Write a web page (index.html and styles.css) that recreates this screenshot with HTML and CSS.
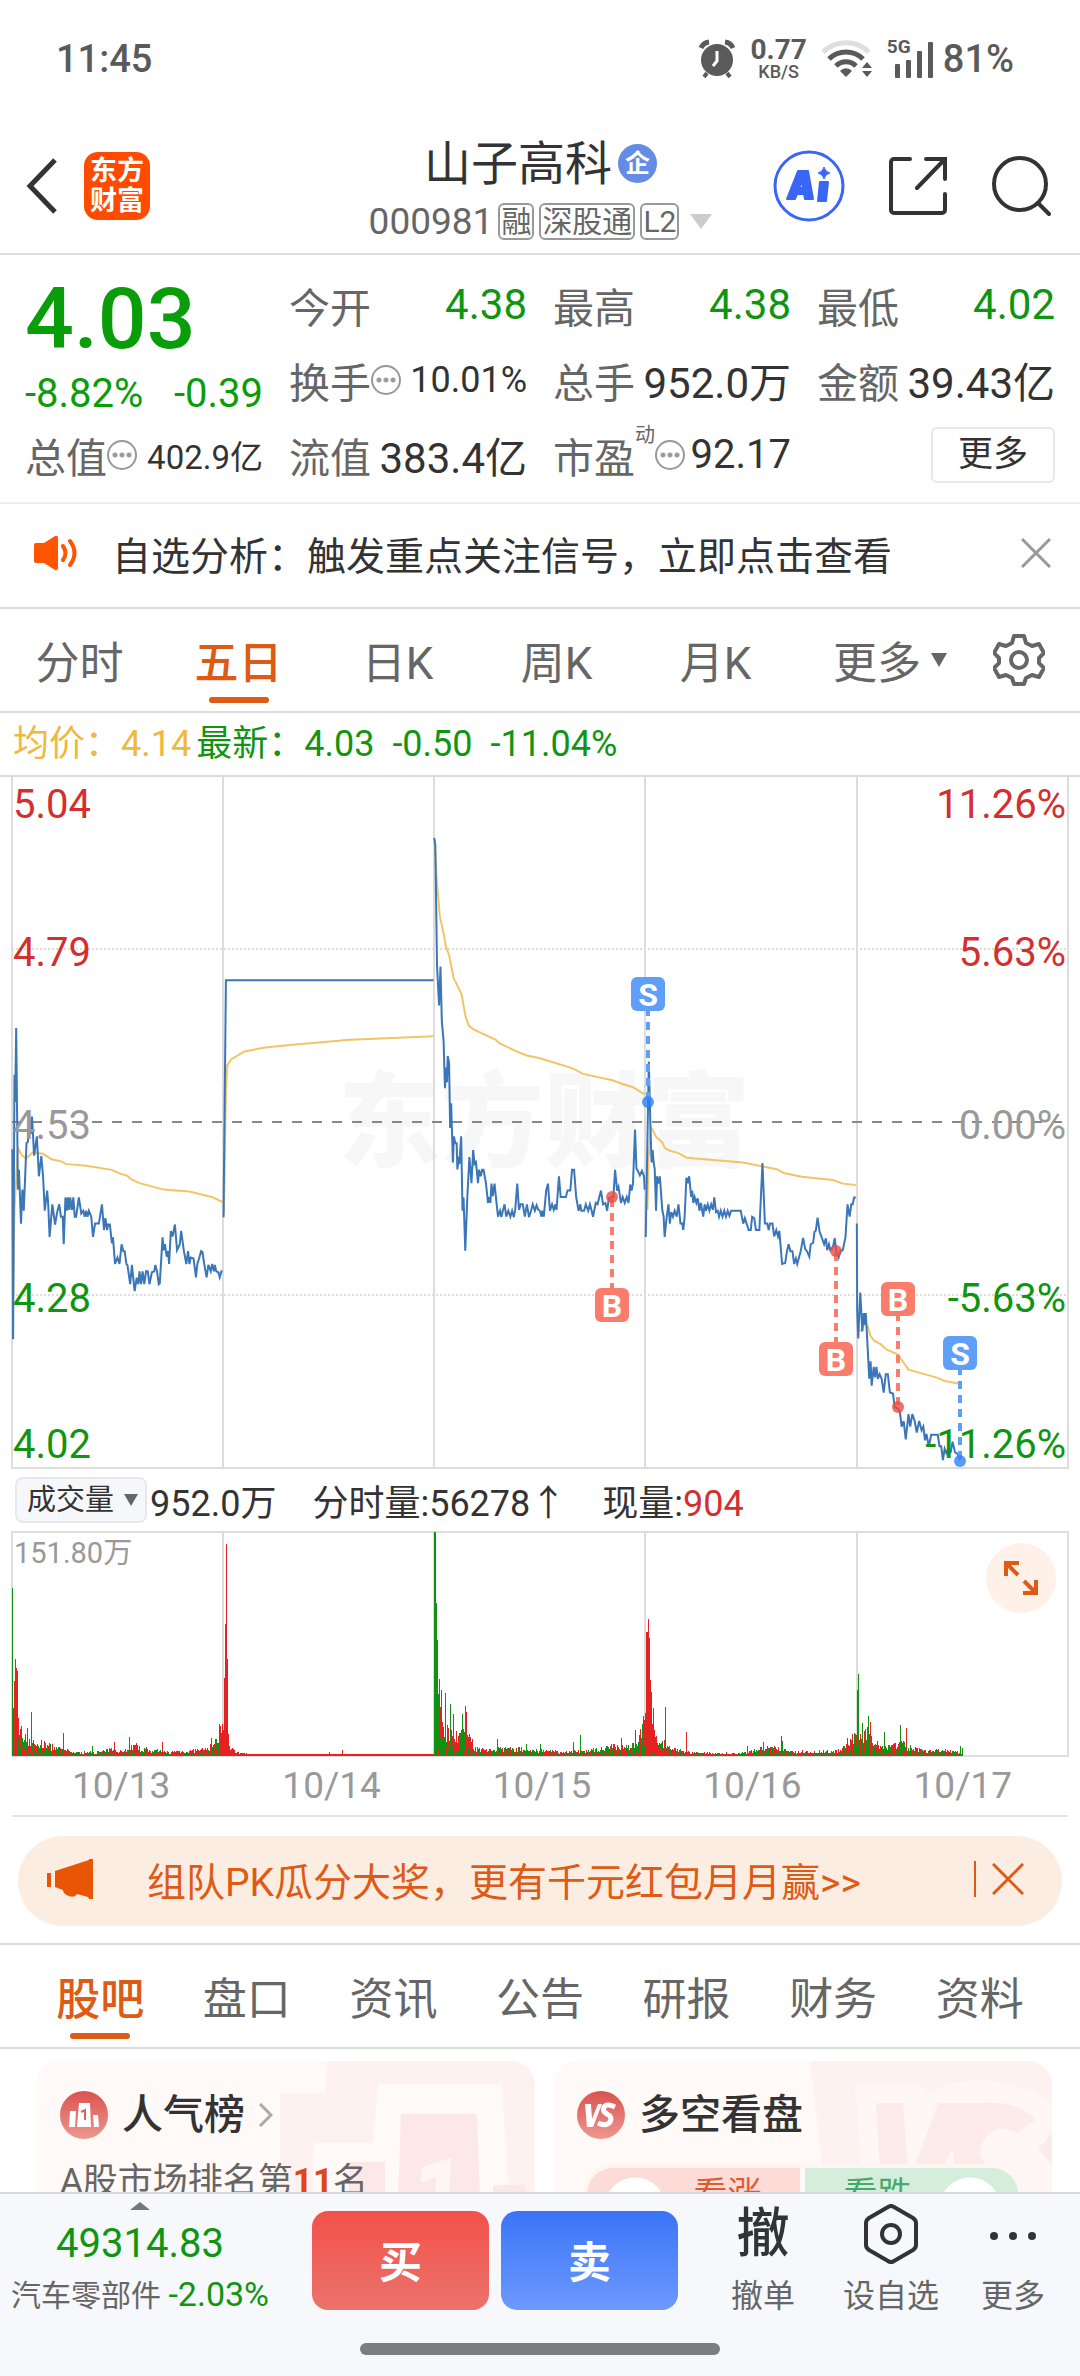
FILE: index.html
```html
<!DOCTYPE html>
<html lang="zh-CN">
<head>
  <meta charset="UTF-8">
  <meta name="viewport" content="width=device-width, initial-scale=1">
  <title>山子高科 000981</title>
  <link rel="stylesheet" href="styles.css">
</head>
<body>
  <div class="status-bar">
    <span class="clock">11:45</span>
    <div class="status-icons">
      <svg width="38" height="40" viewBox="0 0 38 40" fill="none" stroke="#5a5a5a">
        <circle cx="19" cy="21" r="16" fill="#5a5a5a" stroke="none"/>
        <path d="M3 9a10 10 0 0 1 8-6M35 9a10 10 0 0 0-8-6" stroke-width="5"/>
        <path d="M9 34l-3 4M29 34l3 4" stroke-width="4"/>
        <path d="M19 12v10l-4 5" stroke="#fff" stroke-width="3"/>
      </svg>
      <div class="net-speed"><b>0.77</b><span>KB/S</span></div>
      <svg width="52" height="40" viewBox="0 0 52 40" fill="none" stroke="#5a5a5a" stroke-width="5">
        <path d="M2 13a33 33 0 0 1 46 0" stroke="#dedede"/>
        <path d="M8 20a24 24 0 0 1 34 0M15 27a14 14 0 0 1 20 0"/>
        <path d="M25 38l-6-6a8 8 0 0 1 12 0z" fill="#5a5a5a" stroke="none"/>
        <path d="M41 29l5-6 5 6zM41 32l5 6 5-6z" fill="#5a5a5a" stroke="none"/>
      </svg>
      <div class="signal">
        <b>5G</b>
        <svg width="38" height="38" viewBox="0 0 38 38" fill="#5a5a5a">
          <rect x="0" y="24" width="5" height="14" rx="1"/><rect x="11" y="20" width="5" height="18" rx="1"/>
          <rect x="22" y="11" width="5" height="27" rx="1"/><rect x="33" y="2" width="5" height="36" rx="1"/>
        </svg>
      </div>
      <span class="battery">81%</span>
    </div>
  </div>

  <header class="header">
    <div class="header-left">
      <button class="icon-btn" aria-label="返回">
        <svg width="32" height="56" viewBox="0 0 32 56" fill="none" stroke="#333" stroke-width="5"><path d="M29 2L4 28l25 26"/></svg>
      </button>
      <a class="brand" href="#">东方<br>财富</a>
    </div>
    <div class="header-title">
      <h1>山子高科<span class="corp">企</span></h1>
      <div class="code-row">
        <span>000981</span><i>融</i><i>深股通</i><i>L2</i>
        <svg width="22" height="16" viewBox="0 0 22 16"><path d="M0 0h22L11 15z" fill="#ccc"/></svg>
      </div>
    </div>
    <div class="header-right">
      <button class="icon-btn" aria-label="Ai">
        <svg width="72" height="72" viewBox="0 0 72 72" fill="#3a66f5" stroke="#3a66f5" stroke-linejoin="round">
          <circle cx="36" cy="36" r="34" fill="none" stroke-width="3"/>
          <path d="M14 49l11-28h10l5 28h-8l-1-5h-7l-2 5zM26 38h4l-1-7z" fill-rule="evenodd" stroke-width="2"/>
          <path d="M47 32h8l-2 19h-8z" stroke-width="2"/>
          <path d="M51 17q1 5 6 6q-5 1-6 6q-1-5-6-6q5-1 6-6z" stroke-width="1"/>
        </svg>
      </button>
      <button class="icon-btn" aria-label="分享">
        <svg width="58" height="58" viewBox="0 0 58 58" fill="none" stroke="#333" stroke-width="4" stroke-linecap="round">
          <path d="M21 2H5a3 3 0 0 0-3 3v48a3 3 0 0 0 3 3h48a3 3 0 0 0 3-3V37"/>
          <path d="M37 2h19v20M56 2L28 31"/>
        </svg>
      </button>
      <button class="icon-btn" aria-label="搜索">
        <svg width="60" height="60" viewBox="0 0 60 60" fill="none" stroke="#333" stroke-width="4" stroke-linecap="round">
          <circle cx="29" cy="28" r="26"/><path d="M47 47l11 11"/>
        </svg>
      </button>
    </div>
  </header>

  <main>
    <section class="quote">
      <div class="price"><strong>4.03</strong><p><span>-8.82%</span><span>-0.39</span></p></div>
      <dl><dt>今开</dt><dd class="down">4.38</dd></dl>
      <dl><dt>最高</dt><dd class="down">4.38</dd></dl>
      <dl><dt>最低</dt><dd class="down">4.02</dd></dl>
      <dl><dt>换手<em class="dots"></em></dt><dd class="mid">10.01%</dd></dl>
      <dl><dt>总手</dt><dd>952.0万</dd></dl>
      <dl><dt>金额</dt><dd>39.43亿</dd></dl>
      <dl><dt>总值<em class="dots"></em></dt><dd class="small">402.9亿</dd></dl>
      <dl><dt>流值</dt><dd>383.4亿</dd></dl>
      <dl><dt>市盈<sup>动</sup><em class="dots"></em></dt><dd class="pe">92.17</dd></dl>
      <button class="more-btn">更多</button>
    </section>

    <section class="notice">
      <svg width="44" height="36" viewBox="0 0 44 36" fill="#ff5500">
        <path d="M2 8h8L21 1q3-1 3 2v30q0 3-3 2l-11-7H2q-2 0-2-2V10q0-2 2-2z"/>
        <path d="M29 11q5 7 0 14M36 6q9 12 0 24" fill="none" stroke="#ff5500" stroke-width="4" stroke-linecap="round"/>
      </svg>
      <p>自选分析：触发重点关注信号，立即点击查看</p>
      <button class="icon-btn" aria-label="关闭">
        <svg width="30" height="30" viewBox="0 0 30 30" stroke="#999" stroke-width="3"><path d="M1 1l28 28M29 1L1 29"/></svg>
      </button>
    </section>

    <nav class="period-tabs">
      <button>分时</button>
      <button class="active">五日</button>
      <button>日K</button>
      <button>周K</button>
      <button>月K</button>
      <button>更多<svg width="16" height="14" viewBox="0 0 16 14"><path d="M0 0h16L8 14z" fill="#666"/></svg></button>
      <button class="gear" aria-label="设置">
        <svg width="52" height="52" viewBox="0 0 52 52" fill="none" stroke="#666" stroke-width="4" stroke-linejoin="round">
          <path d="M21 2h10l2 7 6 3 7-2 5 9-5 5v5l5 5-5 9-7-2-6 3-2 6H21l-2-6-6-3-7 2-5-9 5-5v-5l-5-5 5-9 7 2 6-3z"/>
          <circle cx="26" cy="26" r="8"/>
        </svg>
      </button>
    </nav>

    <p class="avg-line"><span class="avg">均价：4.14</span><span>最新：4.03</span><span>-0.50</span><span>-11.04%</span></p>

    <svg class="price-chart" viewBox="0 0 1080 694">
      <text class="watermark" x="544" y="384" text-anchor="middle">东方财富</text>
      <g class="grid">
        <path d="M0 1H1080M12 1V693H1068V1M223 1V693M434 1V693M645 1V693M857 1V693"/>
        <path d="M12 174H1068M12 520H1068" stroke-dasharray="2 2"/>
      </g>
      <path class="zero" d="M12 347H1068"/>
      <!-- 左半 / 右半 分时走势 -->
      <g transform="translate(0 -6) scale(.34439 .45918)">
        <path class="avg-path" d="M38,1180L42,960 52,825 62,840 75,848 95,835 125,838 150,850 180,855 190,860 250,864 325,873 345,880 370,886 380,893 405,902 475,916 550,920 615,932 646,943"/>
        <path class="avg-path" d="M650,970L656,700 660,645 672,632 710,615 765,607 840,601 985,592 1000,590 1259,582"/>
        <path class="avg-path" d="M1262,160L1268,240 1277,320 1290,365 1294,385 1304,405 1317,455 1340,490 1352,540 1362,560 1375,567 1440,590 1450,597 1500,615 1530,624 1568,630"/>
        <path class="price-path" d="M36,828L38,1242 42,666 44,725 47,564 52,916 55,873 61,990 65,916 69,962 77,815 81,812 85,760 89,795 93,757 99,842 107,800 113,887 120,843 125,887 130,962 137,918 140,948 144,1019 152,948 160,992 166,965 172,948 177,975 182,975 185,1035 190,933 194,962 197,933 201,960 204,933 209,960 213,933 217,975 221,975 229,933 236,968 242,962 246,975 250,962 254,975 258,962 265,975 270,1019 276,990 287,990 296,948 302,1004 306,978 311,1004 314,992 319,992 325,1033 328,1020 334,1078 341,1064 347,1078 353,1035 358,1050 362,1050 367,1078 370,1080 378,1122 383,1080 391,1137 397,1108 402,1122 405,1094 410,1122 414,1094 419,1122 424,1094 429,1094 434,1122 441,1096 448,1094 451,1080 456,1094 461,1122 464,1120 472,1020 475,1048 479,1035 484,1062 488,1050 491,1078 496,1006 501,1018 508,992 514,1048 522,1035 526,1006 534,1050 541,1078 546,1050 550,1078 554,1064 562,1066 569,1107 573,1078 578,1066 584,1050 588,1052 593,1078 600,1107 605,1080 612,1094 616,1078 621,1094 624,1080 628,1094 634,1096 638,1107 643,1094 646,1094"/>
        <path class="price-path" d="M649,976L656,460H1259"/>
        <path class="price-path" d="M1261,150L1264,165 1269,430 1275,515 1279,430 1283,550 1288,592 1292,695 1296,650 1298,682 1300,625 1304,640 1307,782 1310,728 1315,857 1318,800 1322,815 1326,815 1328,872 1333,845 1334,860 1339,800 1343,962 1346,933 1351,1049 1357,932 1363,845 1369,902 1374,830 1378,860 1382,856 1388,902 1391,873 1396,887 1400,873 1404,873 1411,902 1417,945 1421,932 1424,945 1427,903 1431,930 1436,903 1441,940 1446,975 1452,962 1456,976 1460,962 1465,948 1470,975 1476,962 1482,975 1487,962 1492,976 1496,960 1502,903 1507,960 1512,948 1518,948 1524,975 1530,948 1536,976 1542,962 1547,948 1553,962 1558,950 1563,960 1568,962"/>
      </g>
      <g transform="translate(540 -6) scale(.34439 .45918)">
        <path class="avg-path" d="M0,630L95,652 125,664 210,678 240,686 270,693 305,709"/>
        <path class="avg-path" d="M312,960L315,850 322,780 330,790 338,802 355,813 362,825 375,831 400,836 425,846 450,848 590,857 690,872 708,880 760,888 850,895 880,903 917,906"/>
        <path class="avg-path" d="M930,1225L945,1205 952,1215 960,1235 970,1245 990,1253 1005,1264 1040,1275 1055,1292 1070,1308 1155,1326 1175,1333 1219,1339"/>
        <path class="price-path" d="M0,962L4,975 7,962 11,975 18,918 23,903 29,962 35,948 40,960 45,948 48,960 55,887 60,932 75,932 80,918 88,918 93,873 99,873 105,932 112,962 117,948 120,962 128,962 133,948 140,962 145,948 150,962 154,975 162,945 167,948 177,918 183,948 190,945 195,962 200,935 208,932 213,932 218,873 224,918 228,910 235,945 240,932 246,945 252,932 257,945 262,905 266,918 270,903 276,785 280,870 284,875 290,885 296,875 302,887 304,916"/>
        <path class="price-path" d="M307,1019L316,637 321,790 324,857 327,830 330,857 333,870 337,962 340,887 345,903 348,887 355,960 359,975 362,1019 368,975 373,948 377,990 381,965 386,975 391,962 397,975 402,948 408,990 413,990 416,1004 420,975 425,890 429,902 433,887 439,932 442,918 445,945 449,932 454,945 458,935 463,962 467,945 474,975 478,948 482,962 487,948 492,962 497,948 502,960 506,933 511,965 516,962 520,975 525,962 530,975 535,962 540,975 545,962 550,973 555,962 583,962 590,990 595,978 600,990 606,1004 612,1004 616,975 622,978 627,1004 637,1004 646,858 653,990 660,990 664,1004 668,990 675,990 680,1018 686,1004 691,1018 695,1006 703,1078 712,1076 717,1050 722,1035 727,1050 733,1050 738,1078 743,1066 747,1078 752,1064 757,1050 764,1021 770,1045 775,1050 782,1062 786,1035 793,1032 797,1008 801,1005 806,977 812,1008 818,1020 825,1035 830,1022 834,1048 839,1035 843,1048 851,1040 856,1022 860,1050 867,1064 872,1050 879,1048 887,1020 893,948 899,975 904,948 908,948 912,933 917,933"/>
        <path class="price-path" d="M920,990L921,1180 924,1240 930,1140 936,1225 940,1185 943,1210 946,1185 951,1255 956,1328 960,1290 963,1343 969,1302 973,1325 977,1302 981,1328 986,1318 992,1328 998,1358 1004,1318 1010,1318 1016,1358 1025,1360 1030,1390 1038,1392 1045,1400 1050,1432 1056,1420 1062,1460 1070,1405 1075,1432 1081,1405 1088,1420 1094,1445 1101,1420 1108,1440 1113,1432 1118,1462 1122,1448 1129,1475 1136,1450 1155,1450 1160,1475 1165,1475 1170,1505 1175,1480 1180,1490 1187,1478 1192,1490 1198,1465 1205,1488 1213,1492 1219,1505"/>
      </g>
      <g class="axis">
        <text class="up" x="13" y="43">5.04</text>
        <text class="up" x="13" y="191">4.79</text>
        <text class="flat" x="13" y="364">4.53</text>
        <text class="down" x="13" y="537">4.28</text>
        <text class="down" x="13" y="683">4.02</text>
        <g text-anchor="end">
          <text class="up" x="1066" y="43">11.26%</text>
          <text class="up" x="1066" y="191">5.63%</text>
          <text class="flat" x="1066" y="364">0.00%</text>
          <text class="down" x="1066" y="537">-5.63%</text>
          <text class="down" x="1066" y="683">-11.26%</text>
        </g>
      </g>
      <g id="marks" class="marks"></g>
    </svg>

    <div class="volume-info">
      <label class="picker"><select aria-label="指标"><option>成交量</option></select></label>
      <span>952.0万</span><span>分时量:56278↑</span><span>现量:<b>904</b></span>
    </div>

    <div class="volume">
      <svg viewBox="0 0 1080 226">
        <path class="grid" d="M12 1H1068V225H12zM223 1V225M434 1V225M645 1V225M857 1V225"/>
        <text x="14" y="32">151.80万</text>
        <g id="bars"></g>
      </svg>
      <button class="expand" aria-label="全屏">
        <svg width="36" height="36" viewBox="0 0 36 36" fill="none" stroke="#dd5b14" stroke-width="4"><path d="M3 16V3h13M4 4l11 11M33 20v13H20M32 32L21 21"/></svg>
      </button>
    </div>
    <div class="dates"><span>10/13</span><span>10/14</span><span>10/15</span><span>10/16</span><span>10/17</span></div>

    <section class="promo">
      <svg width="48" height="40" viewBox="0 0 48 40" fill="#e85504"><path d="M0 14h4v14H0zM8 12L42 1V0h4v40h-4l-1-2-11-3q-2 4-8 2t-6-6l-8-3z"/></svg>
      <a href="#">组队PK瓜分大奖，更有千元红包月月赢&gt;&gt;</a>
      <button class="icon-btn" aria-label="关闭">
        <svg width="32" height="32" viewBox="0 0 32 32" stroke="#dd5b14" stroke-width="3"><path d="M1 1l30 30M31 1L1 31"/></svg>
      </button>
    </section>

    <nav class="info-tabs">
      <button class="active">股吧</button>
      <button>盘口</button>
      <button>资讯</button>
      <button>公告</button>
      <button>研报</button>
      <button>财务</button>
      <button>资料</button>
    </nav>

    <section class="cards">
      <article class="card">
        <svg class="card-bg" width="280" height="140" viewBox="0 0 280 140">
          <path d="M72 0h208v140H25V32h45z" fill="#fef2f0"/>
          <path d="M123 23h124l7 117H57l2-58h59z" fill="#fff9f7"/>
          <path d="M146 53h76l3 87h-82zM95 101h35v39H93zM238 124h32v16h-32z" fill="#fce9e7"/>
          <path d="M167 106l29-9-2 43h-14l1-24-15 6z" fill="#fff6f4"/>
        </svg>
        <h2>
          <svg width="48" height="48" viewBox="0 0 48 48">
            <defs><linearGradient id="red" x2="0" y2="1"><stop stop-color="#d9534f"/><stop offset="1" stop-color="#ee9790"/></linearGradient></defs>
            <circle cx="24" cy="24" r="24" fill="url(#red)"/>
            <path d="M10 20h6l-1 16H9zM19 12h11l1 24H17zM33 24h5l1 12h-5z" fill="#fff"/>
            <path d="M21 21l4-2v10" fill="none" stroke="#d9635d" stroke-width="2"/>
          </svg>
          人气榜
          <svg width="14" height="24" viewBox="0 0 14 24" fill="none" stroke="#aaa" stroke-width="3"><path d="M1 1l11 11L1 23"/></svg>
        </h2>
        <p>A股市场排名第<b>11</b>名</p>
      </article>
      <article class="card">
        <svg class="card-bg" width="242" height="140" viewBox="0 0 242 140">
          <path d="M0 0h242v140H16z" fill="#fef2f0"/>
          <path d="M45 22h62l13 11q14-12 40-13 50-2 82 23v97H54z" fill="#fff7f5"/>
          <path d="M66 42h27l5 65H70z" fill="#fdebea"/>
          <path d="M128 42h44q38-2 53 17l-18 13q-14-8-24-2-14 10-12 24 4 14 18 30h-42l-4-36-21 36h-24z" fill="#fdebea"/>
          <path d="M242 72l-14 16 14 16z" fill="#fdebea"/>
        </svg>
        <h2>
          <svg width="48" height="48" viewBox="0 0 48 48">
            <circle cx="24" cy="24" r="24" fill="url(#red)"/>
            <path d="M8 13h6l1 15 6-15h4l-9 23h-6z" fill="#fff"/>
            <path d="M38 16q-8-4-11 0-2 4 3 7 6 3 3 8-4 5-12 1" fill="none" stroke="#fff" stroke-width="5"/>
          </svg>
          多空看盘
        </h2>
        <div class="vote"><button class="bull">看涨</button><button class="bear">看跌</button></div>
      </article>
    </section>
  </main>

  <footer class="trade-bar">
    <div class="trade-row">
      <a class="index" href="#">
        <svg width="20" height="8" viewBox="0 0 20 8"><path d="M0 8L10 0l10 8z" fill="#777"/></svg>
        <strong>49314.83</strong>
        <span>汽车零部件 <b>-2.03%</b></span>
      </a>
      <button class="buy">买</button>
      <button class="sell">卖</button>
      <div class="tools">
        <button><b>撤</b>撤单</button>
        <button>
          <svg width="54" height="60" viewBox="0 0 54 60" fill="none" stroke="#333" stroke-width="4" stroke-linejoin="round">
            <path d="M24 3q3-2 6 0l19 11q3 2 3 5v22q0 3-3 5L30 57q-3 2-6 0L5 46q-3-2-3-5V19q0-3 3-5z"/><circle cx="27" cy="30" r="9"/>
          </svg>设自选
        </button>
        <button>
          <svg width="54" height="60" viewBox="0 0 54 60" fill="#333"><circle cx="8" cy="32" r="4"/><circle cx="27" cy="32" r="4"/><circle cx="46" cy="32" r="4"/></svg>更多
        </button>
      </div>
    </div>
    <div class="home-bar"></div>
  </footer>
  <script src="chart.js"></script>
</body>
</html>
```

FILE: styles.css
```css
* {
  box-sizing: border-box;
}
body {
  margin: 0;
  height: 100vh;
  display: flex;
  flex-direction: column;
  background-color: #fff;
  color: #333;
  font-family: Roboto, "Noto Sans CJK SC", sans-serif;
  font-size: 36px;
  overflow: hidden;
}
h1, h2, p, dl, dd {
  margin: 0;
  font-weight: 400;
}
button {
  border: 0;
  padding: 0;
  background: none;
  color: inherit;
  font: inherit;
}
svg {
  display: block;
  flex: none;
}
a {
  color: inherit;
  text-decoration: none;
}
.up {
  color: #d32f2f;
  fill: #d32f2f;
}
.down {
  color: #109510;
  fill: #109510;
}
.flat {
  fill: #999;
}

/* 状态栏 */
.status-bar {
  display: flex;
  justify-content: space-between;
  align-items: center;
  height: 118px;
  padding: 0 66px 0 56px;
  color: #5a5a5a;
  font-size: 38px;
  font-weight: 500;
}
.status-icons {
  display: flex;
  align-items: center;
  gap: 14px;
}
.net-speed {
  display: flex;
  flex-direction: column;
  align-items: center;
  font-size: 18px;
  line-height: 18px;
}
.net-speed b {
  font-size: 28px;
  font-weight: 700;
  line-height: 26px;
}
.signal {
  display: flex;
  align-items: flex-start;
  position: relative;
  padding-left: 8px;
}
.signal b {
  position: absolute;
  left: 0;
  top: -3px;
  font-size: 19px;
  line-height: 20px;
}
.battery {
  margin-left: -4px;
}

/* 标题栏 */
.header {
  display: grid;
  grid-template-columns: 1fr auto 1fr;
  align-items: center;
  height: 137px;
  padding: 0 29px 0 26px;
  border-bottom: 2px solid #ddd;
}
.header-left, .header-right {
  display: flex;
  align-items: center;
  gap: 26px;
}
.header-right {
  justify-content: flex-end;
  gap: 44px;
}
.brand {
  padding: 4px 6px;
  border-radius: 14px;
  background-color: #ff4a00;
  color: #fff;
  font-size: 27px;
  font-weight: 700;
  line-height: 30px;
}
.header-title {
  display: flex;
  flex-direction: column;
  align-items: center;
  padding: 12px 0 0 4px;
}
.header-title h1 {
  display: flex;
  align-items: center;
  gap: 6px;
  font-size: 47px;
  line-height: 60px;
}
.corp {
  width: 39px;
  border-radius: 50%;
  background-color: #648ce6;
  color: #fff;
  font-size: 25px;
  font-weight: 700;
  line-height: 39px;
  text-align: center;
}
.code-row {
  display: flex;
  align-items: center;
  gap: 5px;
  color: #666;
  font-size: 37px;
  line-height: 56px;
}
.code-row i {
  padding: 0 1px;
  border: 2px solid #999;
  border-radius: 6px;
  font-size: 30px;
  font-style: normal;
  line-height: 33px;
}
.code-row svg {
  margin-left: 6px;
}

/* 行情 */
.quote {
  display: grid;
  grid-template-columns: repeat(4, 1fr);
  grid-template-rows: repeat(3, 75px);
  column-gap: 26px;
  padding: 12px 25px 10px;
  border-bottom: 2px solid #eee;
}
.price {
  grid-row: span 2;
  color: #0a9d0a;
}
.price strong {
  display: block;
  font-size: 86px;
  font-weight: 500;
  line-height: 104px;
}
.price p {
  display: flex;
  justify-content: space-between;
  font-size: 40px;
  line-height: 46px;
}
.quote dl {
  display: flex;
  justify-content: space-between;
  align-items: center;
  white-space: nowrap;
}
.quote dt {
  display: flex;
  align-items: center;
  color: #666;
  font-size: 41px;
}
.quote dt sup {
  align-self: flex-start;
  font-size: 20px;
  line-height: 20px;
}
.quote dd {
  font-size: 42px;
}
.quote dd.mid {
  font-size: 36px;
}
.quote dd.small {
  font-size: 33px;
}
.quote dd.pe {
  font-size: 40px;
}
.dots {
  width: 30px;
  height: 30px;
  border: 2px solid #999;
  border-radius: 50%;
  background: radial-gradient(circle, #999 2px, transparent 3px) 50% 50% / 7px 26px content-box;
  padding: 0 2px;
}
.more-btn {
  justify-self: end;
  align-self: center;
  width: 124px;
  height: 56px;
  border: 2px solid #e8e8e8;
  border-radius: 6px;
  font-size: 35px;
  line-height: 50px;
}

.notice {
  display: flex;
  align-items: center;
  height: 105px;
  padding: 0 29px 6px 34px;
  border-bottom: 2px solid #ddd;
  font-size: 39px;
}
.notice p {
  flex: 1;
  padding-left: 34px;
}

/* 周期 */
.period-tabs {
  display: grid;
  grid-template-columns: repeat(5, 1fr) 190px 95px;
  height: 104px;
  border-bottom: 2px solid #ddd;
}
.period-tabs button, .info-tabs button {
  display: flex;
  justify-content: center;
  align-items: center;
  gap: 10px;
  position: relative;
  color: #666;
  font-size: 44px;
}
.period-tabs .gear {
  justify-content: flex-start;
  padding-left: 8px;
}
.period-tabs .active, .info-tabs .active {
  color: #dd5b14;
  font-weight: 500;
}
.active::after {
  content: "";
  position: absolute;
  left: 50%;
  bottom: 8px;
  width: 60px;
  height: 6px;
  margin-left: -30px;
  border-radius: 3px;
  background-color: #dd5b14;
}
.avg-line {
  display: flex;
  gap: 18px;
  padding-left: 13px;
  color: #109510;
  line-height: 62px;
}
.avg-line .avg {
  margin-right: -13px;
  color: #f0b840;
}

/* 走势图 */
.price-chart {
  width: 100%;
}
.price-chart path, .grid {
  fill: none;
  vector-effect: non-scaling-stroke;
}
.grid {
  stroke: #ddd;
  stroke-width: 2;
}
.price-chart .zero {
  stroke: #888;
  stroke-width: 2;
  stroke-dasharray: 10 10;
}
.price-path {
  stroke: #3a76b8;
  stroke-width: 2;
}
.avg-path {
  stroke: #f3c465;
  stroke-width: 2;
}
.axis {
  font-size: 40px;
}
.watermark {
  fill: #f7f7f7;
  font-size: 103px;
  font-weight: 900;
}
.marks text {
  fill: #fff;
  font-size: 32px;
  font-weight: 700;
  text-anchor: middle;
}

.volume-info {
  display: flex;
  align-items: center;
  height: 62px;
  padding-left: 15px;
}
.volume-info span {
  margin-right: 36px;
}
.volume-info b {
  color: #d32f2f;
  font-weight: 400;
}
.picker {
  display: flex;
  position: relative;
  margin-right: 3px;
}
.picker select {
  width: 132px;
  height: 46px;
  padding: 0 10px;
  border: 2px solid #e6e8ec;
  border-radius: 8px;
  background-color: #f6f7fa;
  color: #333;
  font: inherit;
  font-size: 29px;
  line-height: 40px;
  appearance: none;
}
.picker::after {
  content: "";
  position: absolute;
  right: 9px;
  top: 17px;
  border: 7px solid transparent;
  border-top: 12px solid #666;
  border-bottom: 0;
}
.volume {
  position: relative;
}
.volume > svg {
  width: 100%;
}
.volume text {
  fill: #999;
  font-size: 29px;
}
.expand {
  display: flex;
  justify-content: center;
  align-items: center;
  position: absolute;
  right: 24px;
  top: 12px;
  width: 70px;
  height: 70px;
  border-radius: 50%;
  background-color: #fff0e8;
}
.dates {
  display: grid;
  grid-template-columns: repeat(5, 1fr);
  margin: 0 12px;
  padding-left: 4px;
  border-bottom: 2px solid #e4e4e4;
  color: #999;
  font-size: 37px;
  line-height: 58px;
  text-align: center;
}

.promo {
  display: flex;
  align-items: center;
  height: 90px;
  margin: 19px 18px 17px;
  padding: 0 38px 4px 29px;
  border-radius: 45px;
  background-color: #fcede3;
  color: #dd5b14;
  font-size: 39px;
}
.promo a {
  flex: 1;
  padding-left: 52px;
}
.promo .icon-btn {
  padding: 2px 0 2px 16px;
  border-left: 2px solid #dd5b14;
}
.info-tabs {
  display: grid;
  grid-template-columns: repeat(7, 1fr);
  height: 106px;
  padding: 0 27px;
  border-top: 2px solid #ddd;
  border-bottom: 2px solid #ddd;
}

/* 卡片 */
.cards {
  display: grid;
  grid-template-columns: 1fr 1fr;
  gap: 18px;
  padding: 12px 28px 0 36px;
}
.card {
  position: relative;
  height: 200px;
  padding: 23px 24px;
  border-radius: 24px;
  background-color: #fff9f7;
  overflow: hidden;
}
.card-bg {
  position: absolute;
  right: 0;
  top: 0;
}
.card h2, .card p, .vote {
  position: relative;
}
.card h2 {
  display: flex;
  align-items: center;
  gap: 14px;
  font-size: 41px;
  font-weight: 500;
  line-height: 62px;
}
.card p {
  padding-top: 10px;
  color: #666;
  font-size: 35px;
  line-height: 52px;
}
.card p b {
  color: #dd4814;
}
.vote {
  display: grid;
  grid-template-columns: 1fr 1fr;
  gap: 5px;
  margin: 18px 6px 0;
  border: 4px solid #fff6f3;
  border-radius: 36px;
  font-size: 34px;
  line-height: 52px;
}
.vote button {
  padding: 0 32px 0 100px;
  border-radius: 36px 0 0 36px;
  background: radial-gradient(circle at 48px 40px, #fff 30px, transparent 31px) #fddcd8;
  color: #dd5b34;
}
.vote .bear {
  padding: 0 100px 0 32px;
  border-radius: 0 36px 36px 0;
  background: radial-gradient(circle at calc(100% - 48px) 40px, #fff 30px, transparent 31px) #d5eedc;
  color: #46a869;
}

main {
  flex: 1;
  min-height: 0;
  overflow: hidden;
}

/* 底部交易栏 */
.trade-bar {
  padding-bottom: 21px;
  border-top: 2px solid #d8dade;
  background-color: #f6f8fb;
}
.trade-row {
  display: grid;
  grid-template-columns: 300px 177px 177px 1fr;
  column-gap: 12px;
  height: 149px;
  align-items: start;
}
.index {
  display: flex;
  flex-direction: column;
  align-items: center;
  padding: 8px 20px 0 0;
  white-space: nowrap;
}
.index strong {
  padding-top: 10px;
  color: #109510;
  font-size: 40px;
  font-weight: 400;
  line-height: 48px;
}
.index span {
  color: #666;
  font-size: 30px;
  line-height: 52px;
}
.index b {
  color: #109510;
  font-size: 34px;
  font-weight: 400;
}
.buy, .sell {
  height: 99px;
  margin-top: 17px;
  padding-bottom: 4px;
  border-radius: 16px;
  background: linear-gradient(#f4504a, #ea736c);
  color: #fff;
  font-size: 43px;
  font-weight: 700;
}
.sell {
  background: linear-gradient(#3a74f6, #6d99ff);
}
.tools {
  display: grid;
  grid-template-columns: 146px 110px 1fr;
  padding-top: 10px;
}
.tools button {
  display: flex;
  flex-direction: column;
  align-items: center;
  gap: 10px;
  color: #666;
  font-size: 32px;
  line-height: 44px;
  white-space: nowrap;
}
.tools b {
  color: #333;
  font-size: 53px;
  font-weight: 500;
  line-height: 60px;
}
.home-bar {
  width: 360px;
  height: 12px;
  margin: 0 auto;
  border-radius: 6px;
  background-color: #7c7d80;
}
```

FILE: chart.js
```js
var NS = "http://www.w3.org/2000/svg";

function add(parent, tag, attrs, text) {
  var el = document.createElementNS(NS, tag);
  for (var k in attrs) {
    el.setAttribute(k, attrs[k]);
  }
  if (text) el.textContent = text;
  parent.appendChild(el);
}

// 买卖点: [类型, x, 标签y, 圆点y]
var marks = [
  ["S", 648, 219, 327],
  ["B", 612, 530, 422],
  ["B", 836, 584, 476],
  ["B", 898, 524, 632],
  ["S", 960, 578, 686]
];
var markBox = document.getElementById("marks");
marks.forEach(function (m) {
  var color = m[0] == "S" ? "#5f9ff8" : "#f97c6c";
  var dot = m[0] == "S" ? "#2f80f5" : "#ee4b3e";
  add(markBox, "line", { x1: m[1], y1: m[2], x2: m[1], y2: m[3], stroke: color, "stroke-width": 4, "stroke-dasharray": "8 6" });
  add(markBox, "circle", { cx: m[1], cy: m[3], r: 6, fill: dot, "fill-opacity": 0.8 });
  add(markBox, "rect", { x: m[1] - 17, y: m[2] - 17, width: 34, height: 34, rx: 6, fill: color });
  add(markBox, "text", { x: m[1], y: m[2] + 12 }, m[0]);
});

// 成交量轮廓: [x, 高度]
var outline = [
  [12, 50], [17, 60], [20, 30], [26, 22], [34, 14], [42, 15], [50, 12], [60, 8], [75, 4], [100, 5], [115, 9], [122, 5], [130, 12],
  [150, 7], [165, 5], [190, 6], [205, 8], [215, 16], [222, 26], [227, 20], [230, 10], [236, 5], [248, 2], [433, 2],
  [434, 120], [440, 60], [445, 30], [455, 30], [462, 24], [468, 36], [474, 10], [485, 7], [510, 9], [560, 5], [590, 7],
  [620, 12], [635, 14], [644, 40], [650, 60], [655, 28], [668, 10], [690, 4], [740, 3], [760, 9], [775, 10], [790, 5], [835, 6],
  [848, 12], [856, 30], [862, 28], [870, 26], [880, 12], [900, 16], [910, 10], [925, 6], [945, 7], [963, 3]
];
// 单根放量: [x, 高度, 涨跌]
var peaks = [
  [12, 168, 0], [14, 75, 1], [15, 97, 0], [16, 88, 1], [17, 85, 0], [31, 44, 1], [27, 28, 1], [63, 23, 0], [92, 10, 0], [114, 14, 1],
  [129, 19, 0], [136, 13, 1], [162, 14, 1], [211, 18, 1], [219, 32, 1], [220, 30, 1], [222, 32, 1], [224, 78, 1], [225, 132, 1],
  [226, 212, 1], [227, 97, 1], [228, 22, 1], [342, 6, 1], [329, 4, 1],
  [434, 224, 0], [435, 224, 0], [436, 153, 0], [437, 116, 0], [439, 77, 0], [441, 66, 1], [445, 63, 0], [450, 52, 0], [453, 42, 1],
  [462, 42, 0], [465, 50, 0], [466, 44, 1], [497, 17, 0], [526, 12, 0], [540, 12, 0], [573, 14, 0], [580, 21, 0], [611, 12, 0],
  [621, 18, 0], [635, 26, 1], [642, 32, 0], [646, 124, 1], [647, 124, 1], [648, 137, 1], [649, 118, 1], [650, 76, 1], [651, 64, 0],
  [653, 48, 0], [665, 49, 0], [686, 24, 1], [747, 10, 1], [763, 14, 0], [781, 20, 0], [782, 15, 0], [847, 18, 1], [852, 22, 1],
  [857, 66, 0], [858, 82, 0], [862, 33, 0], [868, 40, 0], [870, 34, 1], [884, 24, 0], [900, 31, 0], [906, 28, 1], [960, 10, 0], [962, 8, 0]
];
var bars = document.getElementById("bars");
var seed = 7;
function rand() {
  seed = (seed * 16807) % 2147483647;
  return seed / 2147483647;
}
function bar(x, h, up) {
  add(bars, "rect", { x: x, y: 225 - h, width: 1, height: h, fill: up ? "#e52222" : "#129012" });
}
for (var i = 0; i < outline.length - 1; i++) {
  var a = outline[i], b = outline[i + 1];
  for (var x = a[0]; x < b[0]; x++) {
    var h = a[1] + (b[1] - a[1]) * (x - a[0]) / (b[0] - a[0]);
    var day2 = x > 223 && x < 434;
    var up = day2 || rand() > 0.5;
    bar(x, Math.max(2, Math.round(h * (0.45 + 0.65 * rand()))), up);
    if (!day2) bar(x, Math.max(1, Math.round(h * 0.4 * rand())), !up);
  }
}
peaks.forEach(function (p) {
  bar(p[0], p[1], p[2]);
});
```
